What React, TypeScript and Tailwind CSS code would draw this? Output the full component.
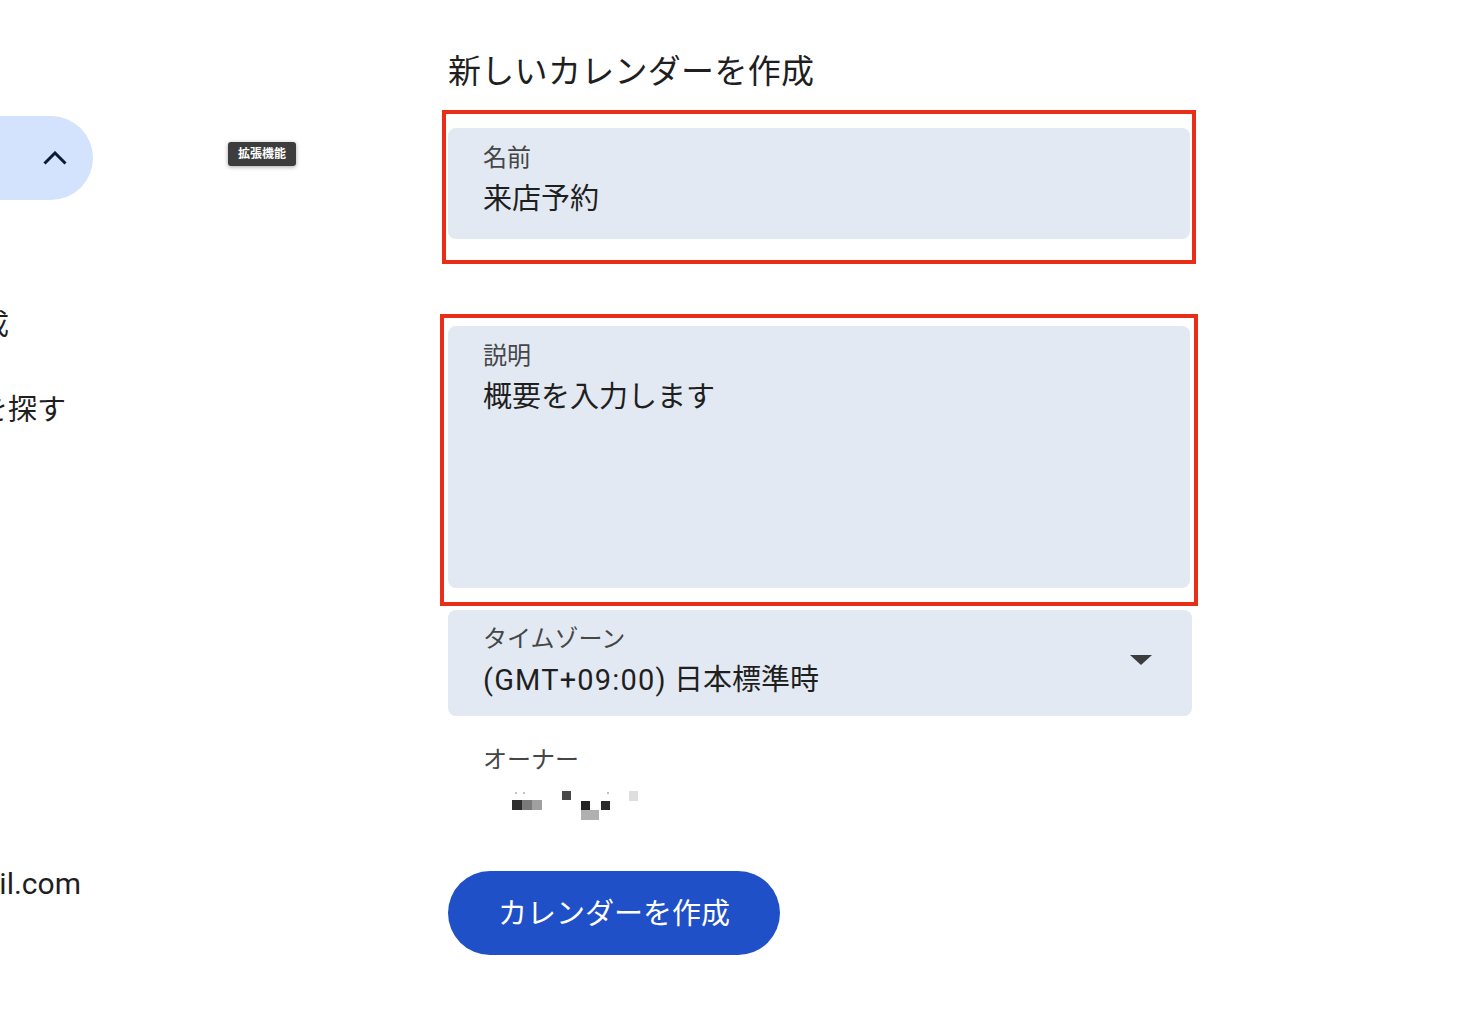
const font = { fontFamily: "Roboto, 'Noto Sans CJK JP', sans-serif" }

function Field({ label, value, height, children }: { label: string; value: string; height: string; children?: React.ReactNode }) {
  return (
    <div className={`relative w-full rounded-lg bg-[#e3e9f2] pl-[35px] pt-[14px] ${height}`}>
      <div className="text-[24px] leading-[32px] text-[#444746]">{label}</div>
      <div className="mt-[6px] text-[29px] leading-[38px] text-[#1f1f1f]">{value}</div>
      {children}
    </div>
  )
}

function Mosaic() {
  return (
    <svg width="160" height="34" viewBox="0 0 160 34">
      <rect x="32" y="4" width="2" height="2" fill="#c4c4c4" />
      <rect x="40" y="4" width="2" height="2" fill="#c4c4c4" />
      <rect x="29" y="12" width="10" height="10" fill="#2e2e2e" />
      <rect x="39" y="12" width="10" height="10" fill="#7a7a7a" />
      <rect x="49" y="12" width="10" height="10" fill="#a0a0a0" />
      <rect x="79" y="3" width="9" height="9" fill="#4a4a4a" />
      <rect x="124" y="4" width="2" height="2" fill="#bdbdbd" />
      <rect x="98" y="13" width="9" height="9" fill="#242424" />
      <rect x="118" y="13" width="9" height="9" fill="#2a2a2a" />
      <rect x="98" y="22" width="18" height="10" fill="#b0b0b0" />
      <rect x="146" y="3" width="9" height="10" fill="#dedede" />
    </svg>
  )
}

export default function App() {
  return (
    <div className="flex min-h-[1015px] w-full bg-white text-[#1f1f1f]" style={font}>
      <aside className="relative w-[448px] shrink-0">
        <div className="mt-[116px] flex h-[84px] w-[93px] items-center justify-end rounded-r-[42px] bg-[#d3e3fd] pr-[26px]">
          <svg width="24" height="14" viewBox="0 0 24 14" fill="none">
            <path d="M1.5 12.5 12 2l10.5 10.5" stroke="#0b1b33" strokeWidth="3" />
          </svg>
        </div>
        <div className="absolute left-[228px] top-[142px] flex h-[24px] w-[68px] items-center justify-center rounded-[3px] bg-[#3d3d3d] text-[12px] font-bold text-white shadow-[0_1px_4px_rgba(0,0,0,0.35)]">
          拡張機能
        </div>
        {/* sidebar labels are cut off by the left edge of the window */}
        <div className="mt-[105px] flex w-[9px] justify-end overflow-hidden whitespace-nowrap text-[29px] leading-[40px]">
          新しいカレンダーを作成
        </div>
        <div className="mt-[45px] flex w-[66px] justify-end overflow-hidden whitespace-nowrap text-[29px] leading-[40px]">
          関心のあるカレンダーを探す
        </div>
        <div className="mt-[434px] flex w-[81px] justify-end overflow-hidden whitespace-nowrap text-[30px] leading-[40px]">
          calendar.user@gmail.com
        </div>
      </aside>

      <main className="w-[744px] shrink-0 pt-[52px]">
        <h1 className="text-[33px] leading-[40px] font-normal tracking-[0.3px]">新しいカレンダーを作成</h1>

        <div className="-ml-[6px] -mr-[4px] mt-[18px] border-4 border-[#e82e17] pb-[21px] pl-[2px] pr-[2px] pt-[14px]">
          <Field label="名前" value="来店予約" height="h-[111px]" />
        </div>

        <div className="-ml-[8px] -mr-[6px] mt-[50px] border-4 border-[#e82e17] pb-[14px] pl-[4px] pr-[4px] pt-[8px]">
          <Field label="説明" value="概要を入力します" height="h-[262px]" />
        </div>

        <div className="mt-[4px]">
          <div className="flex h-[106px] w-full items-start justify-between rounded-lg bg-[#e3e9f2] pl-[35px] pr-[40px] pt-[13px]">
            <div>
              <div className="text-[24px] leading-[32px] text-[#444746]">タイムゾーン</div>
              <div className="mt-[6px] text-[29px] leading-[38px] text-[#1f1f1f]">
                <span className="tracking-[1.2px]">(GMT+09:00)</span> 日本標準時
              </div>
            </div>
            <svg className="mt-[32px]" width="22" height="10" viewBox="0 0 22 10">
              <path d="M0 0h22L11 10z" fill="#3c3c3c" />
            </svg>
          </div>
        </div>

        <div className="mt-[28px] pl-[35px]">
          <div className="text-[24px] leading-[32px] text-[#444746]">オーナー</div>
          <div className="mt-[12px]">
            <Mosaic />
          </div>
        </div>

        <button className="mt-[49px] flex h-[84px] w-[332px] items-center justify-center rounded-full bg-[#1f50c8] pt-[4px] text-[29px] text-white">
          カレンダーを作成
        </button>
      </main>
    </div>
  )
}
